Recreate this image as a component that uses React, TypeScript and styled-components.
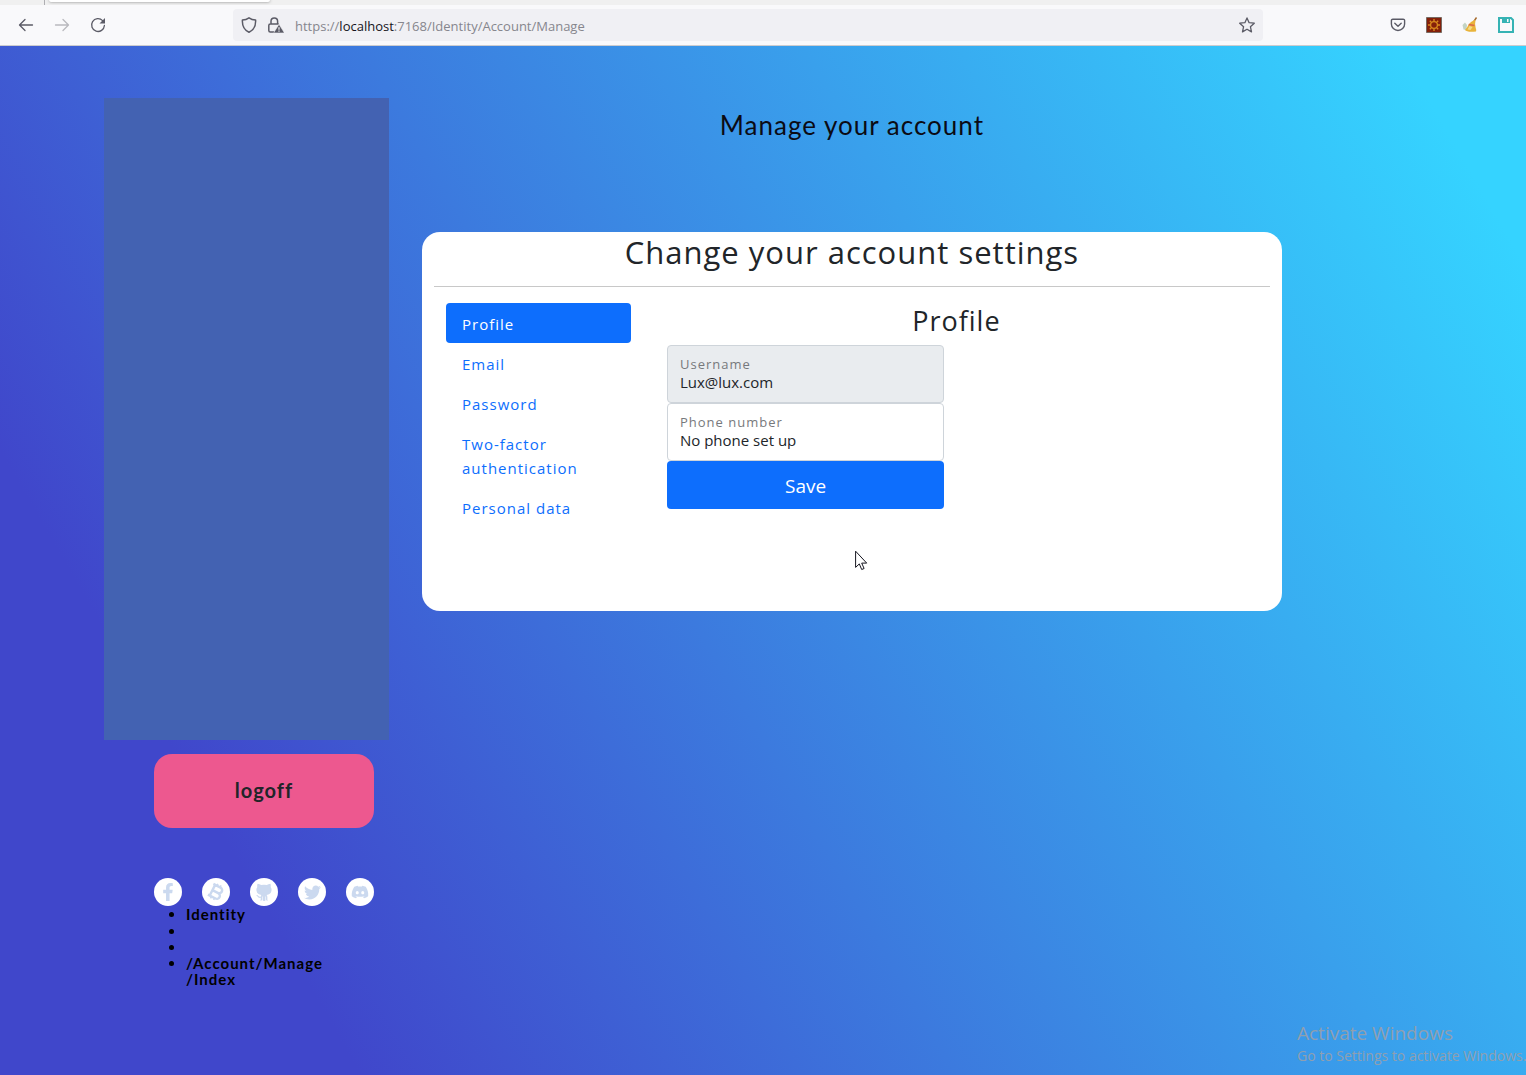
import React from "react";
import styled, { createGlobalStyle, css } from "styled-components";
import { FaFacebookF, FaTwitter, FaDiscord } from "react-icons/fa";

const uiFont = `"Segoe UI", "Open Sans", "Noto Sans", sans-serif`;
const brandFont = `"Gilroy", "Lato", "Open Sans", sans-serif`;

const GlobalStyle = createGlobalStyle`
  *, *::before, *::after { box-sizing: border-box; }
  body { margin: 0; font-family: ${uiFont}; color: #212529; }
  h1, h2, h3, p, ul { margin: 0; padding: 0; font-weight: 400; }
  button, input { font: inherit; color: inherit; letter-spacing: normal; }
`;

const Window = styled.div`
  display: flex;
  flex-direction: column;
  min-height: 100vh;
  position: relative;
  overflow: hidden;
`;

const TabStrip = styled.div`
  display: flex;
  height: 5px;
  background: #f0f0f0;
  overflow: hidden;
`;

const PinnedTab = styled.div`
  width: 45px;
  border-right: 1px solid #aeaeb2;
`;

const ActiveTab = styled.div`
  width: 221px;
  height: 2px;
  margin-left: 4px;
  border-radius: 0 0 4px 4px;
  background: #fff;
  box-shadow: 0 0 3px rgba(0, 0, 0, 0.5);
`;

const Toolbar = styled.header`
  display: flex;
  align-items: center;
  height: 41px;
  padding: 0 2px 0 8px;
  background: #f9f9fb;
  border-bottom: 1px solid #cccccf;
`;

const Group = styled.div<{ $push?: boolean }>`
  display: flex;
  ${(p) => p.$push && css`margin-left: auto;`}
`;

const ToolButton = styled.button`
  display: flex;
  align-items: center;
  justify-content: center;
  width: 36px;
  height: 32px;
  padding: 0;
  border: 0;
  background: none;
  color: #5b5b66;
  &:disabled { color: #b9b9be; }
`;

const AddressBar = styled.div`
  display: flex;
  align-items: center;
  flex: 0 1 1030px;
  height: 32px;
  margin-left: 117px;
  padding: 0 8px;
  gap: 11px;
  border-radius: 4px;
  background: #f0f0f4;
  color: #5b5b66;
`;

const Address = styled.div`
  flex: 1;
  padding-top: 2px;
  font-size: 13px;
  line-height: 20px;
  color: #86868d;
  white-space: nowrap;
  b { font-weight: 400; color: #15141a; }
`;

const Page = styled.div`
  flex: 1;
  display: flex;
  align-items: flex-start;
  gap: 33px;
  padding: 52px 16% 52px 104px;
  letter-spacing: 1px;
  background: linear-gradient(60deg, #4047cb 17%, #35d3ff 94%);
`;

const Sidebar = styled.aside`
  flex: 0 0 285px;
`;

const SidebarPanel = styled.div`
  height: 642px;
  background: #4362b2;
`;

const SidebarFooter = styled.div`
  width: 220px;
  margin: 14px 0 0 50px;
  font-family: ${brandFont};
`;

const Logoff = styled.button`
  display: block;
  width: 100%;
  height: 74px;
  padding: 0 0 2px;
  border: 0;
  border-radius: 18px;
  background: #ed588f;
  font-size: 20px;
  font-weight: 700;
  letter-spacing: 1px;
`;

const Socials = styled.nav`
  display: flex;
  justify-content: space-between;
  margin-top: 50px;
`;

const Social = styled.a`
  display: flex;
  align-items: center;
  justify-content: center;
  width: 28px;
  height: 28px;
  border-radius: 50%;
  background: #fff;
  color: #cbd9ef;
`;

const Crumbs = styled.ul`
  padding-left: 32px;
  color: #000;
  font-size: 15px;
  font-weight: 700;
  line-height: 16px;
  li { min-height: 16px; }
  li:first-child { padding-bottom: 1px; }
`;

const Main = styled.main`
  flex: 1;
  min-width: 0;
  text-align: center;
`;

const PageTitle = styled.h1`
  padding-top: 12px;
  color: #0b0b14;
  font-family: ${brandFont};
  font-size: 26px;
  line-height: 30px;
`;

const Card = styled.section`
  min-height: 379px;
  margin-top: 92px;
  padding: 0 12px;
  border-radius: 18px;
  background: #fff;
`;

const CardTitle = styled.h2`
  padding-bottom: 14px;
  border-bottom: 1px solid #c8c8c8;
  font-size: 31px;
  line-height: 40px;
`;

const Columns = styled.div`
  display: grid;
  grid-template-columns: 1fr 3fr;
  padding-top: 16px;
`;

const SideNav = styled.nav`
  display: flex;
  flex-direction: column;
  padding: 0 12px;
  text-align: left;
`;

const SideLink = styled.a<{ $active?: boolean }>`
  padding: 9px 16px 7px;
  border-radius: 4px;
  font-size: 15px;
  line-height: 24px;
  text-decoration: none;
  color: ${(p) => (p.$active ? "#fff" : "#0d6efd")};
  background: ${(p) => (p.$active ? "#0d6efd" : "none")};
`;

const Content = styled.div`
  padding: 0 12px;
`;

const SectionTitle = styled.h3`
  padding-bottom: 6px;
  font-size: 27px;
  line-height: 36px;
`;

const Form = styled.form`
  display: flex;
  flex-direction: column;
  width: 50%;
  padding: 0 12px;
`;

const Field = styled.label<{ $disabled?: boolean }>`
  display: flex;
  flex-direction: column;
  height: 58px;
  padding: 9px 12px 0;
  border: 1px solid #ced4da;
  border-radius: 4px;
  text-align: left;
  background: ${(p) => (p.$disabled ? "#e9ecef" : "#fff")};
`;

const FieldName = styled.span`
  font-size: 13px;
  line-height: 18px;
  color: #77797c;
`;

const FieldInput = styled.input`
  width: 100%;
  height: 18px;
  padding: 0;
  border: 0;
  outline: 0;
  background: none;
  font-size: 15px;
  line-height: 18px;
  color: #212529;
`;

const Save = styled.button`
  height: 48px;
  padding: 2px 0 0;
  border: 0;
  border-radius: 4px;
  background: #0d6efd;
  color: #fff;
  font-size: 19px;
`;

const Watermark = styled.div`
  position: absolute;
  left: calc(100% - 229px);
  bottom: 9px;
  color: #8f9fb0;
  white-space: nowrap;
  pointer-events: none;
`;

const WatermarkLine = styled.p<{ $large?: boolean }>`
  font-size: ${(p) => (p.$large ? 19 : 14)}px;
  line-height: ${(p) => (p.$large ? 26 : 20)}px;
`;

const Pointer = styled.svg`
  position: absolute;
  left: 855px;
  top: 550px;
`;

const stroke = {
  fill: "none",
  stroke: "currentColor",
  strokeWidth: 1.3,
  strokeLinecap: "round" as const,
  strokeLinejoin: "round" as const,
};

const Icon = ({ size = 16, children }: { size?: number; children: React.ReactNode }) => (
  <svg width={size} height={size} viewBox="0 0 16 16" aria-hidden="true">
    {children}
  </svg>
);

const BackIcon = () => <Icon><path {...stroke} d="M14.5 8H1.6M7 2.5 1.5 8 7 13.5" /></Icon>;
const ForwardIcon = () => <Icon><path {...stroke} d="M1.5 8h12.9M9 2.5 14.5 8 9 13.5" /></Icon>;
const ReloadIcon = () => (
  <Icon>
    <path {...stroke} d="M12.600 3.600A6.400 6.400 0 1 0 14.400 8.500" />
    <path fill="currentColor" d="M15 1v5.500H9.500z" />
  </Icon>
);
const ShieldIcon = () => (
  <Icon>
    <path {...stroke} strokeWidth={1.5} d="M8 .8C6 2.200 3.800 2.900 1.400 3.100c-.3 5.400 1.400 9.700 6.600 12.100 5.200-2.400 6.900-6.700 6.600-12.100C12.200 2.900 10 2.200 8 .8z" />
  </Icon>
);
const LockIcon = () => (
  <Icon>
    <path {...stroke} strokeWidth={1.5} d="M3 7V4.300a3.300 3.300 0 0 1 6.600 0V7M6 15H2.300A1.500 1.500 0 0 1 .8 13.500v-5A1.500 1.500 0 0 1 2.300 7h8" />
    <path fill="currentColor" stroke="#f0f0f4" strokeWidth=".6" d="M11 7.200 16 15.200q.2.800-.6.800H6.600q-.8 0-.6-.8z" />
    <path stroke="#f0f0f4" strokeWidth="1.200" d="M11 10.300v2.500M11 13.600v1.200" />
  </Icon>
);
const StarIcon = () => (
  <Icon>
    <path {...stroke} d="m8 .9 2.100 4.800 5.200.5-3.900 3.500 1.100 5.200L8 12.200l-4.500 2.700 1.100-5.200L.7 6.200l5.200-.5z" />
  </Icon>
);
const PocketIcon = () => (
  <Icon>
    <path {...stroke} strokeWidth={1.4} d="M2.800 2.200h10.400a1.400 1.400 0 0 1 1.400 1.400v3.300a6.600 6.600 0 0 1-13.200 0V3.600a1.400 1.400 0 0 1 1.400-1.400zM4.800 6.200 8 9.200l3.200-3" />
  </Icon>
);
const GearIcon = () => (
  <Icon>
    <path fill="#84200a" stroke="#776a62" d="M.5.5h15v15H.5z" />
    <circle cx="8" cy="8" r="3.400" fill="none" stroke="#d98b1d" strokeWidth="1.300" />
    <path stroke="#d98b1d" strokeWidth="1.400" d="M8 2v2M8 12v2M2 8h2M12 8h2M3.800 3.800l1.300 1.300M10.900 10.900l1.300 1.300M3.800 12.200l1.300-1.300M10.900 5.100l1.300-1.300" />
  </Icon>
);
const BroomIcon = () => (
  <Icon>
    <path fill="#c3d3c4" d="M.5 8 3 5.500 5 8l-.5 5-3-.5z" />
    <path stroke="#a66a2c" strokeWidth="1.400" d="M14.500.5 11.500 5" />
    <path fill="#e9b43b" d="M12.500 3q-4 1.500-6 4.500-1 3-3.500 5.500 2 2.500 11 1.500.8-1-.3-3.500-1.200-4-.2-7.500z" />
    <path fill="#f6dc86" d="m7.500 9 3 1-2 3-3-.5z" />
    <path stroke="#dc6a4a" strokeWidth="1.500" d="m6.800 7.600 5.700.8" />
  </Icon>
);
const FloppyIcon = () => (
  <Icon>
    <path fill="#f9f9fb" stroke="#36b3b4" strokeWidth="2" d="M1 1h12l2 2v12H1z" />
    <path fill="#36b3b4" d="M4 1h8v5H4z" />
    <path fill="#f9f9fb" d="M9 2h1.500v3H9z" />
  </Icon>
);
const OctocatIcon = () => (
  <Icon size={18}>
    <path fill="currentColor" d="M2.300.6c1.300.1 2.200.6 3 1.200a12 12 0 0 1 5.400 0c.8-.6 1.700-1.100 3-1.200.5 1.300.4 2.200.2 2.900.8 1 1 2.200.7 3.700-.4 2.300-2 3.200-4.300 3.500.5.500.7 1.100.7 1.900v2.200l.6.700h-1.400l-.4-.6v-3h-.5v3.600l-.9.500H7.700l-.8-.5v-3.600h-.5v3l-.5.600H4.500l.6-.8v-1.500c-1.700.2-2.400-.5-3-1.500-.3-.5-.7-.8-1.200-.9.900-.5 1.700 0 2.200.8.500.6 1 .8 2 .6 0-.7.200-1.100.600-1.500-2.300-.3-3.900-1.200-4.300-3.500C1.100 5.700 1.300 4.500 2.100 3.500 1.900 2.800 1.800 1.900 2.300.6z" />
  </Icon>
);

/* Outlined coin mark: a thick two-bowl shape with four short prongs, leaning right. */
const BitcoinIcon = () => (
  <svg width="20" height="20" viewBox="0 0 20 20" aria-hidden="true">
    <g transform="rotate(27 10 10)" fill="none" stroke="currentColor">
      <path strokeWidth="2.400" strokeLinejoin="round" d="M4 4h8a3 3 0 0 1 0 6H6h6.500a3 3 0 0 1 0 6H4M6 4v12" />
      <path strokeWidth="1.600" d="M8 1.800v2M11.500 1.800v2M8 16.200v2M11.500 16.200v2" />
    </g>
  </svg>
);

const links = ["Profile", "Email", "Password", "Two-factor authentication", "Personal data"];

const socials = [
  { label: "Facebook", icon: <FaFacebookF size={18} /> },
  { label: "Bitcoin", icon: <BitcoinIcon /> },
  { label: "GitHub", icon: <OctocatIcon /> },
  { label: "Twitter", icon: <FaTwitter size={17} /> },
  { label: "Discord", icon: <FaDiscord size={18} /> },
];

export default function App() {
  return (
    <Window>
      <GlobalStyle />
      <TabStrip>
        <PinnedTab />
        <ActiveTab />
      </TabStrip>
      <Toolbar>
        <Group>
          <ToolButton aria-label="Back"><BackIcon /></ToolButton>
          <ToolButton aria-label="Forward" disabled><ForwardIcon /></ToolButton>
          <ToolButton aria-label="Reload"><ReloadIcon /></ToolButton>
        </Group>
        <AddressBar>
          <ShieldIcon />
          <LockIcon />
          <Address role="textbox" aria-label="Address">
            https://<b>localhost</b>:7168/Identity/Account/Manage
          </Address>
          <StarIcon />
        </AddressBar>
        <Group $push>
          <ToolButton aria-label="Pocket"><PocketIcon /></ToolButton>
          <ToolButton aria-label="Settings"><GearIcon /></ToolButton>
          <ToolButton aria-label="Clean"><BroomIcon /></ToolButton>
          <ToolButton aria-label="Save page"><FloppyIcon /></ToolButton>
        </Group>
      </Toolbar>
      <Page>
        <Sidebar>
          <SidebarPanel />
          <SidebarFooter>
            <Logoff type="button">logoff</Logoff>
            <Socials>
              {socials.map((s) => (
                <Social key={s.label} href="#" aria-label={s.label}>{s.icon}</Social>
              ))}
            </Socials>
            <Crumbs>
              <li>Identity</li>
              <li />
              <li />
              <li>/Account/Manage<br />/Index</li>
            </Crumbs>
          </SidebarFooter>
        </Sidebar>
        <Main>
          <PageTitle>Manage your account</PageTitle>
          <Card>
            <CardTitle>Change your account settings</CardTitle>
            <Columns>
              <SideNav>
                {links.map((label, i) => (
                  <SideLink key={label} href="#" $active={i === 0}>{label}</SideLink>
                ))}
              </SideNav>
              <Content>
                <SectionTitle>Profile</SectionTitle>
                <Form onSubmit={(e) => e.preventDefault()}>
                  <Field $disabled>
                    <FieldName>Username</FieldName>
                    <FieldInput disabled defaultValue="Lux@lux.com" />
                  </Field>
                  <Field>
                    <FieldName>Phone number</FieldName>
                    <FieldInput defaultValue="No phone set up" />
                  </Field>
                  <Save type="submit">Save</Save>
                </Form>
              </Content>
            </Columns>
          </Card>
        </Main>
      </Page>
      <Watermark>
        <WatermarkLine $large>Activate Windows</WatermarkLine>
        <WatermarkLine>Go to Settings to activate Windows.</WatermarkLine>
      </Watermark>
      <Pointer width="13" height="21" viewBox="0 0 13 21" aria-hidden="true">
        <path fill="#fff" stroke="#15151f" d="M.6 1.200v16.200l3.700-3.500 2.400 5.600 2.400-1-2.400-5.400h5z" />
      </Pointer>
    </Window>
  );
}
